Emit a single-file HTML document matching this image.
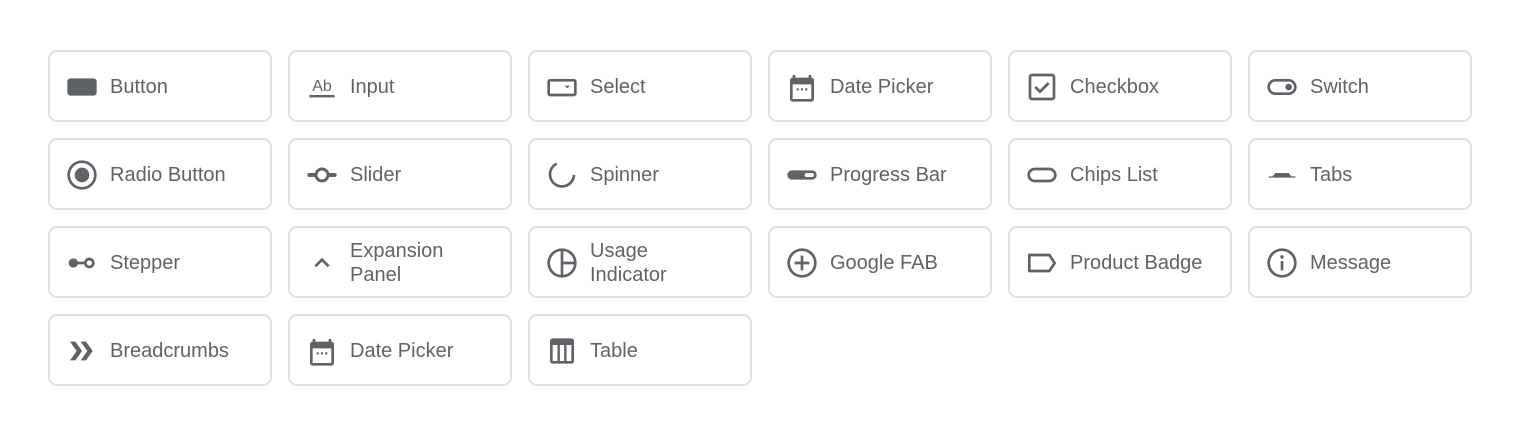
<!DOCTYPE html>
<html><head><meta charset="utf-8"><style>
body{margin:0;background:#fff;width:1520px;height:434px;overflow:hidden;font-family:"Liberation Sans",Arial,sans-serif}
.c{position:absolute;width:220px;height:68px;border:2px solid #dfe0e3;border-radius:9px;box-sizing:content-box}
.c svg{position:absolute;left:16px;top:19px;width:32px;height:32px}
.c span{position:absolute;left:60px;top:1px;height:68px;display:flex;align-items:center;font-size:20px;line-height:24px;color:#5f6368}
</style></head><body>
<div class="c" style="left:48px;top:50px"><svg viewBox="0 0 24 24"><rect x="1" y="5.5" width="22" height="13" rx="2.5" fill="#5f6368"/></svg><span>Button</span></div>
<div class="c" style="left:288px;top:50px"><svg viewBox="0 0 24 24"><text x="12" y="15" text-anchor="middle" font-size="12" font-family="Liberation Sans" fill="#5f6368">Ab</text><rect x="2.5" y="18" width="19" height="1.8" fill="#5f6368"/></svg><span>Input</span></div>
<div class="c" style="left:528px;top:50px"><svg viewBox="0 0 24 24"><rect x="2" y="7" width="20" height="11" rx="1" fill="none" stroke="#5f6368" stroke-width="2"/><path d="M14 11h4l-2 2z" fill="#5f6368"/></svg><span>Select</span></div>
<div class="c" style="left:768px;top:50px"><svg viewBox="0 0 24 24"><path d="M5 3h2v2h10V3h2v2a2 2 0 0 1 2 2v14a2 2 0 0 1-2 2H5a2 2 0 0 1-2-2V7a2 2 0 0 1 2-2zM5 10v11h14V10z" fill="#5f6368"/><rect x="8" y="13" width="1.6" height="1.6" fill="#5f6368"/><rect x="11.2" y="13" width="1.6" height="1.6" fill="#5f6368"/><rect x="14.4" y="13" width="1.6" height="1.6" fill="#5f6368"/></svg><span>Date Picker</span></div>
<div class="c" style="left:1008px;top:50px"><svg viewBox="0 0 24 24"><rect x="3" y="3" width="18" height="18" rx="1.5" fill="none" stroke="#5f6368" stroke-width="2"/><path d="M7 12l3.5 3.5L17 9" fill="none" stroke="#5f6368" stroke-width="2"/></svg><span>Checkbox</span></div>
<div class="c" style="left:1248px;top:50px"><svg viewBox="0 0 24 24"><rect x="2" y="7" width="20" height="10" rx="5" fill="none" stroke="#5f6368" stroke-width="2"/><circle cx="17" cy="12" r="2.5" fill="#5f6368"/></svg><span>Switch</span></div>

<div class="c" style="left:48px;top:138px"><svg viewBox="0 0 24 24"><circle cx="12" cy="12" r="10" fill="none" stroke="#5f6368" stroke-width="2"/><circle cx="12" cy="12" r="5.5" fill="#5f6368"/></svg><span>Radio Button</span></div>
<div class="c" style="left:288px;top:138px"><svg viewBox="0 0 24 24"><rect x="1" y="10.5" width="22" height="3" rx="1.5" fill="#5f6368"/><circle cx="12" cy="12" r="4.5" fill="#fff" stroke="#5f6368" stroke-width="2.2"/></svg><span>Slider</span></div>
<div class="c" style="left:528px;top:138px"><svg viewBox="0 0 24 24"><path d="M8 3.5A9 9 0 1 0 21 12" fill="none" stroke="#5f6368" stroke-width="2"/></svg><span>Spinner</span></div>
<div class="c" style="left:768px;top:138px"><svg viewBox="0 0 24 24"><rect x="1" y="8.5" width="22" height="7" rx="3.5" fill="#5f6368"/><rect x="14" y="10.5" width="7" height="3" rx="1.5" fill="#fff"/></svg><span>Progress Bar</span></div>
<div class="c" style="left:1008px;top:138px"><svg viewBox="0 0 24 24"><rect x="2" y="7.5" width="20" height="9" rx="4.5" fill="none" stroke="#5f6368" stroke-width="2"/></svg><span>Chips List</span></div>
<div class="c" style="left:1248px;top:138px"><svg viewBox="0 0 24 24"><path d="M2 14h20v-1h-3L17 10.5H7L5 13H2z" fill="#5f6368"/></svg><span>Tabs</span></div>

<div class="c" style="left:48px;top:226px"><svg viewBox="0 0 24 24"><circle cx="5.5" cy="12" r="3.5" fill="#5f6368"/><rect x="8" y="11" width="6" height="2" fill="#5f6368"/><circle cx="17.5" cy="12" r="3" fill="none" stroke="#5f6368" stroke-width="2"/></svg><span>Stepper</span></div>
<div class="c" style="left:288px;top:226px"><svg viewBox="0 0 24 24"><path d="M7 14.5l5-5 5 5" fill="none" stroke="#5f6368" stroke-width="2"/></svg><span>Expansion<br>Panel</span></div>
<div class="c" style="left:528px;top:226px"><svg viewBox="0 0 24 24"><circle cx="12" cy="12" r="10" fill="none" stroke="#5f6368" stroke-width="2"/><path d="M12 2v20M12 12h10" stroke="#5f6368" stroke-width="2"/></svg><span>Usage<br>Indicator</span></div>
<div class="c" style="left:768px;top:226px"><svg viewBox="0 0 24 24"><circle cx="12" cy="12" r="10" fill="none" stroke="#5f6368" stroke-width="2"/><path d="M12 6.5v11M6.5 12h11" stroke="#5f6368" stroke-width="2"/></svg><span>Google FAB</span></div>
<div class="c" style="left:1008px;top:226px"><svg viewBox="0 0 24 24"><path d="M2.5 6h15l4 6-4 6h-15z" fill="none" stroke="#5f6368" stroke-width="2" stroke-linejoin="round"/></svg><span>Product Badge</span></div>
<div class="c" style="left:1248px;top:226px"><svg viewBox="0 0 24 24"><circle cx="12" cy="12" r="10" fill="none" stroke="#5f6368" stroke-width="2"/><rect x="11" y="10.5" width="2" height="7" fill="#5f6368"/><circle cx="12" cy="7.5" r="1.3" fill="#5f6368"/></svg><span>Message</span></div>

<div class="c" style="left:48px;top:314px"><svg viewBox="0 0 24 24"><path d="M3 5h4l5 7-5 7H3l5-7zM11 5h4l5 7-5 7h-4l5-7z" fill="#5f6368"/></svg><span>Breadcrumbs</span></div>
<div class="c" style="left:288px;top:314px"><svg viewBox="0 0 24 24"><path d="M5 3h2v2h10V3h2v2a2 2 0 0 1 2 2v14a2 2 0 0 1-2 2H5a2 2 0 0 1-2-2V7a2 2 0 0 1 2-2zM5 10v11h14V10z" fill="#5f6368"/><rect x="8" y="13" width="1.6" height="1.6" fill="#5f6368"/><rect x="11.2" y="13" width="1.6" height="1.6" fill="#5f6368"/><rect x="14.4" y="13" width="1.6" height="1.6" fill="#5f6368"/></svg><span>Date Picker</span></div>
<div class="c" style="left:528px;top:314px"><svg viewBox="0 0 24 24"><rect x="4" y="3.5" width="16" height="17" rx="1" fill="none" stroke="#5f6368" stroke-width="2"/><rect x="4" y="3.5" width="16" height="4" fill="#5f6368"/><path d="M9.5 7v13M14.5 7v13" stroke="#5f6368" stroke-width="1.8"/></svg><span>Table</span></div>
</body></html>
